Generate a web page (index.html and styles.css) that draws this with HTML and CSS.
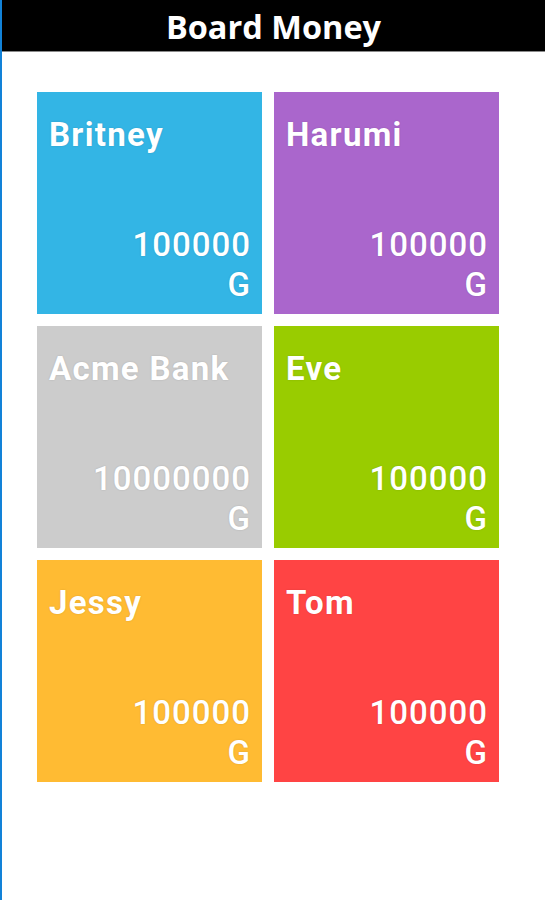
FILE: index.html
```html
<!DOCTYPE html>
<html lang="en">
<head>
  <meta charset="UTF-8">
  <title>Board Money</title>
  <link rel="stylesheet" href="styles.css">
</head>
<body>
  <header class="title-bar">Board Money</header>

  <main class="board">
    <div class="tile tile-blue">
      <div class="player">Britney</div>
      <div class="money">100000<br>G</div>
    </div>
    <div class="tile tile-purple">
      <div class="player">Harumi</div>
      <div class="money">100000<br>G</div>
    </div>
    <div class="tile tile-gray">
      <div class="player">Acme Bank</div>
      <div class="money">10000000<br>G</div>
    </div>
    <div class="tile tile-green">
      <div class="player">Eve</div>
      <div class="money">100000<br>G</div>
    </div>
    <div class="tile tile-orange">
      <div class="player">Jessy</div>
      <div class="money">100000<br>G</div>
    </div>
    <div class="tile tile-red">
      <div class="player">Tom</div>
      <div class="money">100000<br>G</div>
    </div>
  </main>
</body>
</html>
```

FILE: styles.css
```css
html,
body {
  height: 100%;
}

body {
  margin: 0;
  background-color: #ffffff;
  border-left: 2px solid #1282d8;
  font-family: Roboto, "Liberation Sans", sans-serif;
}

.title-bar {
  height: 51px;
  line-height: 54px;
  background-color: #000000;
  border-bottom: 1px solid #8a8a8a;
  color: #ffffff;
  font-family: "Open Sans", "Liberation Sans", sans-serif;
  font-size: 32.5px;
  font-weight: 700;
  text-align: center;
}

.board {
  display: grid;
  grid-template-columns: 225px 225px;
  grid-auto-rows: 222px;
  gap: 12px;
  padding: 40px 0 0 35px;
}

.tile {
  display: flex;
  flex-direction: column;
  justify-content: space-between;
  padding: 23px 11px 9px 12px;
  color: #ffffff;
  font-size: 33px;
  line-height: 40px;
  text-shadow: 0 0 2px rgba(0, 0, 0, 0.15);
}

.player {
  font-weight: 700;
  letter-spacing: 1.3px;
}

.money {
  font-weight: 500;
  letter-spacing: 1px;
  text-align: right;
}

.tile-blue { background-color: #33b5e5; }
.tile-purple { background-color: #aa66cc; }
.tile-gray { background-color: #cccccc; }
.tile-green { background-color: #99cc00; }
.tile-orange { background-color: #ffbb33; }
.tile-red { background-color: #ff4444; }
```
